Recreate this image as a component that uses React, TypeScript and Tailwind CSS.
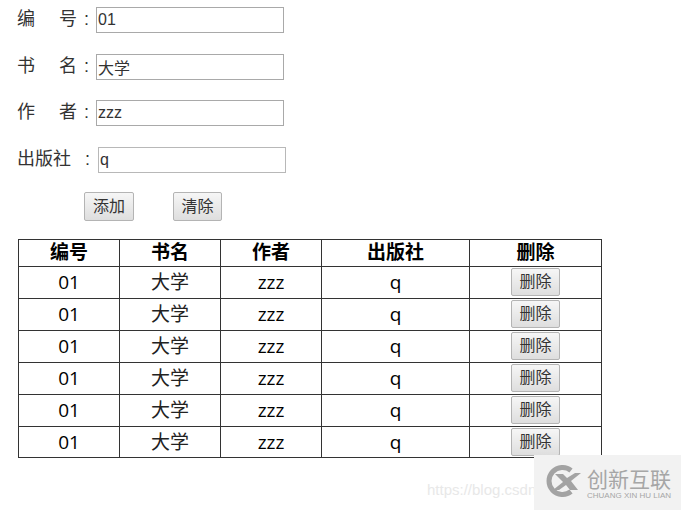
import React from 'react'

const font = "[font-family:'Liberation_Sans','Noto_Sans_CJK_SC',sans-serif]"
const dataFont = "font-['Open_Sans','Noto_Sans_CJK_SC',sans-serif] text-[19px]"

const fields = [
  { label: '编', label2: '号', value: '01' },
  { label: '书', label2: '名', value: '大学' },
  { label: '作', label2: '者', value: 'zzz' },
]

const rows = [1, 2, 3, 4, 5, 6]

function GreyButton({ text, className }: { text: string; className: string }) {
  return (
    <button className={`rounded-[2px] border border-[#b4b4b4] bg-gradient-to-b from-[#f6f6f6] to-[#dedede] text-[#333] ${className}`}>
      {text}
    </button>
  )
}

function Logo() {
  return (
    <div className="absolute bottom-0 right-0 h-[55px] w-[147px] bg-[#f2f2f2]">
      <div className="flex items-start gap-[6px] pl-[12px] pt-[10px]">
        <svg width="35" height="32" viewBox="0 0 35 32" fill="none">
          <path d="M25 5.5A13.5 13.5 0 1 0 25 26.5" stroke="#a3a3a3" strokeWidth="5" />
          <path d="M9 9h8l4 4 8-5h6l-10 8 7 9h-8l-4-5-7 5h-6l10-8z" fill="#a3a3a3" />
        </svg>
        <div className="flex flex-col pt-[4px]">
          <span className="text-[21px] leading-[22px] text-[#a6a6a6]">创新互联</span>
          <span className="whitespace-nowrap text-[8px] leading-[9px] text-[#a6a6a6]">CHUANG XIN HU LIAN</span>
        </div>
      </div>
    </div>
  )
}

export default function App() {
  return (
    <div className={`relative h-[510px] w-[681px] overflow-hidden bg-white ${font}`}>
      <div className="pl-[18px] pt-[7px]">
        {fields.map((f, i) => (
          <div key={f.label} className={`flex h-[26px] items-center ${i === 0 ? '' : i === 1 ? 'mt-[21px]' : 'mt-[20px]'}`}>
            <span className="-ml-[1px] -mt-[3px] flex w-[79px] text-[18px] leading-[26px] text-[#333]">
              <span className="w-[42px]">{f.label}</span>
              <span className="w-[25px]">{f.label2}</span>
              <span>:</span>
            </span>
            <input
              readOnly
              value={f.value}
              className="h-[26px] w-[188px] border border-[#a9a9a9] pl-[1px] text-[16px] text-[#333] outline-none"
            />
          </div>
        ))}
        <div className="mt-[21px] flex h-[26px] items-center">
          <span className="-ml-[1px] -mt-[3px] flex w-[81px] text-[18px] leading-[26px] text-[#333]">
            <span className="w-[68px]">出版社</span>
            <span>:</span>
          </span>
          <input
            readOnly
            value="q"
            className="h-[26px] w-[188px] border border-[#b8b8b8] pl-[1px] text-[16px] text-[#333] outline-none"
          />
        </div>
        <div className="ml-[66px] mt-[19px] flex gap-[39px]">
          <GreyButton text="添加" className="h-[29px] w-[50px] text-[16px]" />
          <GreyButton text="清除" className="h-[29px] w-[49px] text-[16px]" />
        </div>
      </div>

      <table className="ml-[18px] mt-[18px] w-[583px] table-fixed border-collapse text-center text-[18px] text-black">
        <colgroup>
          <col className="w-[101px]" />
          <col className="w-[101px]" />
          <col className="w-[101px]" />
          <col className="w-[148px]" />
          <col className="w-[132px]" />
        </colgroup>
        <thead>
          <tr className="h-[27px]">
            {['编号', '书名', '作者', '出版社', '删除'].map((h) => (
              <th key={h} className="border border-[#333] p-0 align-middle text-[19px] font-bold leading-[26px]">
                {h}
              </th>
            ))}
          </tr>
        </thead>
        <tbody>
          {rows.map((r) => (
            <tr key={r} className={r === 6 ? 'h-[31px]' : 'h-[32px]'}>
              <td className={`border border-[#333] p-0 ${dataFont}`}>01</td>
              <td className={`border border-[#333] p-0 text-[#222] ${dataFont}`}>大学</td>
              <td className={`border border-[#333] p-0 font-medium ${dataFont}`}>zzz</td>
              <td className={`border border-[#333] p-0 font-medium ${dataFont}`}>q</td>
              <td className="border border-[#333] p-0 align-top">
                <GreyButton text="删除" className="mx-auto mt-[1px] block h-[28px] w-[49px] text-[16px]" />
              </td>
            </tr>
          ))}
        </tbody>
      </table>

      <span className="absolute left-[427px] top-[479px] text-[15px] text-[#e8e8e8]">https://blog.csdn</span>
      <Logo />
    </div>
  )
}
